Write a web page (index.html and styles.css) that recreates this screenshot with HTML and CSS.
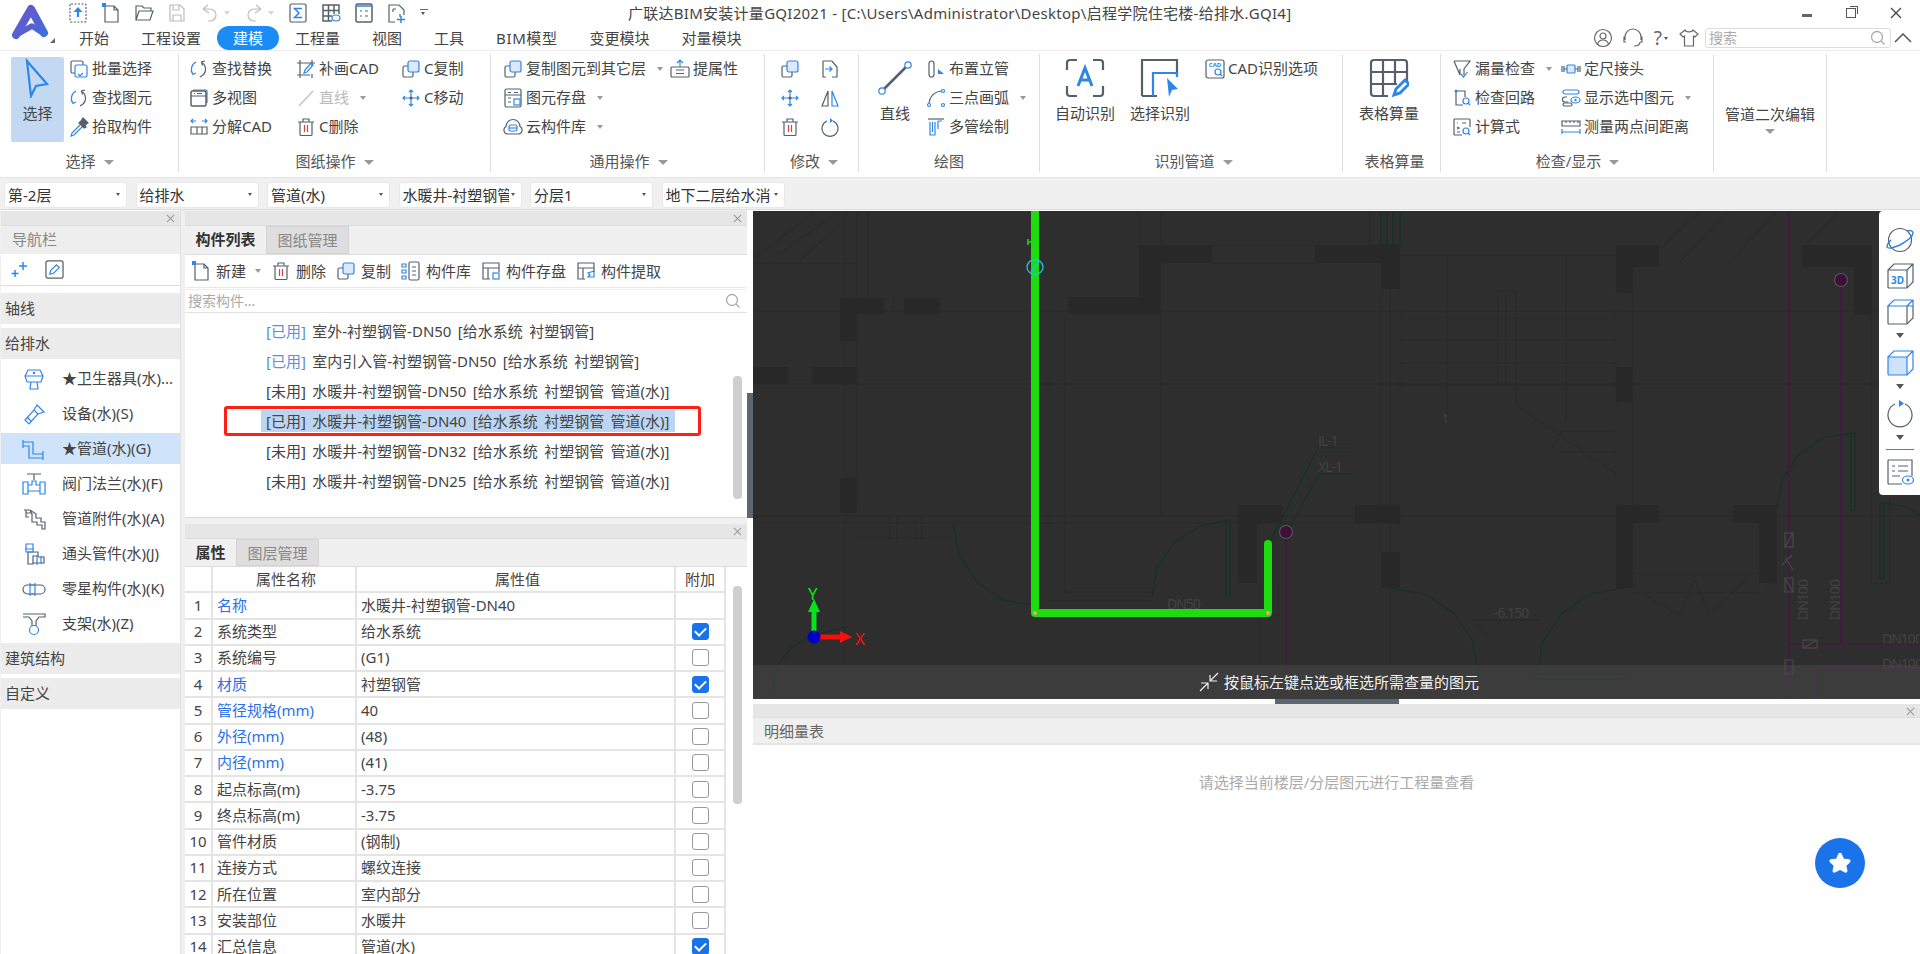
FILE: index.html
```html
<!DOCTYPE html>
<html lang="zh-CN">
<head>
<meta charset="utf-8">
<title>广联达BIM安装计量GQI2021</title>
<link rel="stylesheet" href="styles.css">
</head>
<body>
<svg class="defs" width="0" height="0">
<symbol id="i-copy" viewBox="0 0 20 20"><rect x="2" y="7" width="10" height="11" rx="1.5"/><rect class="b lf" x="7" y="2" width="11" height="11" rx="2"/></symbol>
<symbol id="i-batch" viewBox="0 0 20 20"><rect x="2" y="2" width="12" height="12" rx="1.5"/><rect class="b wf" x="6" y="6" width="12" height="12" rx="1.5"/><path class="b" d="M9 15l2 2 3-3"/></symbol>
<symbol id="i-find" viewBox="0 0 20 20"><path class="b" d="M7 3a8 8 0 0 0-3 12M2 12l2 3.500 3-1.500"/><path d="M12 3a8 8 0 0 1 2 13M16 2l-3.500 1 1 3.500M11 18l3-2"/></symbol>
<symbol id="i-pick" viewBox="0 0 20 20"><path class="dk" d="M12 4l2-3 5 5-3 2 1 2-2 1-5-5z"/><path class="b" d="M11 8l-8 8-1 3 3-1 8-8"/></symbol>
<symbol id="i-multi" viewBox="0 0 20 20"><path class="b" d="M4 2h13a1 1 0 0 1 1 1v12"/><rect class="th15" x="2" y="3" width="15" height="15" rx="1.500"/><path d="M2 8h15M5 5.500h1M8 5.500h5"/></symbol>
<symbol id="i-explode" viewBox="0 0 20 20"><path class="b" d="M2 4h5M4 2L2 4l2 2M18 4h-5M16 2l2 2-2 2"/><path d="M2 10h16v7H2zM8 10v7M13 10v7"/></symbol>
<symbol id="i-patch" viewBox="0 0 20 20"><path d="M4 1v18M16 1v6M16 15v4M1 4h18M1 16h13"/><path class="b" d="M8 14l1-3 6-7 2 2-6 7z"/></symbol>
<symbol id="i-gline" viewBox="0 0 20 20"><path class="gr" d="M3 18L17 3"/></symbol>
<symbol id="i-trash" viewBox="0 0 20 20"><path d="M4 5h12v12.500a1 1 0 0 1-1 1H5a1 1 0 0 1-1-1zM2 5h16M7 5V2h6v3"/><path class="r" d="M8.500 8v7M11.500 8v7"/></symbol>
<symbol id="i-move" viewBox="0 0 20 20"><path class="b" d="M10 2v16M2 10h16M8 4l2-2 2 2M8 16l2 2 2-2M4 8l-2 2 2 2M16 8l2 2-2 2"/><circle class="dk" cx="10" cy="10" r="1"/></symbol>
<symbol id="i-extract" viewBox="0 0 20 20"><path class="b" d="M10 8V1M7 4l3-3 3 3"/><rect x="1" y="8" width="18" height="10" rx="1"/><path d="M6 11h8M6 14.500h8"/></symbol>
<symbol id="i-store" viewBox="0 0 20 20"><rect x="2" y="1" width="16" height="18" rx="1.500"/><path d="M2 7h16M5 4.500h3M11 4.500h4M5 10h3M5 14h3"/><rect class="b" x="11" y="11" width="6" height="6"/></symbol>
<symbol id="i-cloud" viewBox="0 0 20 20"><path d="M5 17a4 4 0 0 1-2-7.500A7 7 0 0 1 17 9.500 4 4 0 0 1 15 17z"/><rect class="b" x="6" y="8" width="8" height="6" rx="1.500"/><path class="b" d="M6 11h8"/></symbol>
<symbol id="i-exchange" viewBox="0 0 20 20"><path d="M3 2h9l5 6v10H12M3 2v16h3"/><path class="b" d="M5 10h7M9.500 7.500l2.500 2.500-2.500 2.500"/></symbol>
<symbol id="i-mirror" viewBox="0 0 20 20"><path d="M8 3L2 18h6z"/><path class="b" d="M12 3l6 15h-6z"/></symbol>
<symbol id="i-rotate" viewBox="0 0 20 20"><path d="M7 4a8 8 0 1 0 6 0"/><path class="bf" d="M10 1l3 2.500-3 2.500z"/></symbol>
<symbol id="i-line" viewBox="0 0 36 36"><path class="th" d="M6 30L30 6"/><circle class="b wf" cx="31" cy="5" r="3.200"/><circle class="b wf" cx="5" cy="31" r="3.200"/></symbol>
<symbol id="i-riser" viewBox="0 0 20 20"><rect x="3" y="2" width="5" height="16" rx="2.500"/><path class="bf" d="M12 10l6 5h-6z"/></symbol>
<symbol id="i-arc" viewBox="0 0 20 20"><path d="M3 17C3 8 9 3 17 3"/><circle class="b wf" cx="17" cy="3" r="1.500"/><circle class="b wf" cx="3" cy="17" r="1.500"/><circle class="b wf" cx="17" cy="17" r="1.500"/></symbol>
<symbol id="i-pipes" viewBox="0 0 20 20"><path d="M2 2h16"/><path class="b" d="M4 5v13h5V5M6.500 5v10M12 4h4M12 4v8"/></symbol>
<symbol id="i-auto" viewBox="0 0 40 40"><path class="th2" d="M2 12V5a3 3 0 0 1 3-3h7M28 2h7a3 3 0 0 1 3 3v7M2 28v7a3 3 0 0 0 3 3h7M38 28v7a3 3 0 0 1-3 3h-7"/><path class="b th3" d="M13 28L20 10l7 18M15.500 22h9"/></symbol>
<symbol id="i-sel" viewBox="0 0 40 40"><path class="th2" d="M2 38V2h35v15M2 38h15"/><path class="b th2" d="M13 38V15h24v4"/><path class="bf" d="M27 20l11 11-6 1-3 7z"/></symbol>
<symbol id="i-table" viewBox="0 0 40 40"><path class="th2" d="M19 38H5a3 3 0 0 1-3-3V5a3 3 0 0 1 3-3h30a3 3 0 0 1 3 3v20M2 14h36M2 26h26M14 2v36M26 2v24"/><path class="b th3" d="M25 37l2-6 9-9 4 4-9 9z"/></symbol>
<symbol id="i-filter" viewBox="0 0 20 20"><path d="M2 2h16l-6 8v6M8 10v6L2 2"/><path class="b" d="M9 15l2.500 3 4-5"/></symbol>
<symbol id="i-loop" viewBox="0 0 20 20"><path d="M4 3v14h7M4 3h9v6"/><circle class="bf" cx="4" cy="3" r="1.500"/><circle class="b" cx="14" cy="13" r="3"/><path class="b" d="M16 15l2 2"/></symbol>
<symbol id="i-calc" viewBox="0 0 20 20"><path d="M10 18H3a1 1 0 0 1-1-1V3a1 1 0 0 1 1-1h14a1 1 0 0 1 1 1v7"/><path d="M5 6h1M10 6h4M5 10l2 1-2 1M5 15h3"/><circle class="b" cx="14" cy="14" r="3"/><path class="b" d="M16 16l2 2"/></symbol>
<symbol id="i-splice" viewBox="0 0 20 20"><path d="M1 7v6M3 7v6M17 7v6M19 7v6M3 10h3M14 10h3"/><rect class="b lf" x="6" y="6" width="8" height="8" rx="1"/></symbol>
<symbol id="i-display" viewBox="0 0 20 20"><rect class="b" x="2" y="2" width="16" height="4" rx="2"/><path d="M6 9H4a2 2 0 0 0 0 5h3"/><rect x="2" y="15" width="9" height="3" rx="1.500"/><ellipse class="b" cx="14.500" cy="12" rx="4.500" ry="3"/><circle class="bf" cx="14.500" cy="12" r="1.200"/></symbol>
<symbol id="i-measure" viewBox="0 0 20 20"><path d="M1 4h18v5H1zM5 4v2M9 4v2M13 4v2M17 4v2"/><path class="b" d="M1 12v5M19 12v5M1 15h18"/></symbol>
<symbol id="i-wc" viewBox="0 0 24 24"><path class="b" d="M6 3h12l3 6-2 6H5L3 9zM3 9h18M9 15l-1 7h8l-1-7"/><circle class="b" cx="12" cy="6" r=".6"/></symbol>
<symbol id="i-equip" viewBox="0 0 24 24"><path class="b" d="M3 18l9-10 4 4-9 10zM12 8l3-5 7 7-6 2M15 3l-2 3M5 15l4 4"/></symbol>
<symbol id="i-pipe" viewBox="0 0 24 24"><path class="b" d="M1 3v8M1 5h10v12h10M1 9h6v12h14M21 14v9"/></symbol>
<symbol id="i-valve" viewBox="0 0 24 24"><path class="dk2" d="M5 2h14M12 2v6"/><path class="b" d="M1 10h5v12H1zM18 10h5v12h-5zM6 13h4v-4h4v4h4M6 19h12"/></symbol>
<symbol id="i-attach" viewBox="0 0 24 24"><path class="dk2" d="M2 3h6l2 4v8h5v3h5v4h3v-7h-4v-4h-5V7L8 3M4 3v7h3M4 6h6"/></symbol>
<symbol id="i-tee" viewBox="0 0 24 24"><path class="dk2" d="M6 22V10h10v4h-5v8zM16 15h6v6H11"/><path class="b" d="M4 2h7v8H4zM3 7h9M15 13v10M19 14v8"/></symbol>
<symbol id="i-part" viewBox="0 0 24 24"><rect class="dk2" x="1" y="8" width="22" height="9" rx="4.500"/><path class="b" d="M8 6v13M13 6v13M8 8h5M8 17h5"/></symbol>
<symbol id="i-bracket" viewBox="0 0 24 24"><path class="dk2" d="M1 2h22v3H17L14 9v5M1 5h6l3 4v5"/><circle class="b" cx="12" cy="18" r="4.500"/></symbol>
<symbol id="i-search" viewBox="0 0 16 16"><circle class="lg" cx="7" cy="7" r="5.500"/><path class="lg" d="M11 11l3.500 3.500"/></symbol>
<symbol id="i-planet" viewBox="0 0 28 28"><circle cx="14" cy="14" r="11.500"/><path class="b th1" d="M21 5c4-1 6 0 6 2 0 3-6 8-13 12-7 3-12 4-13 2 0-2 1-4 4-7"/></symbol>
<symbol id="i-cube" viewBox="0 0 28 28"><path d="M2 8v17a1 1 0 0 0 1 1h18l6-6V8"/><path class="b" d="M2 8l6-6h19v6l-6 0zM27 2l-6 6"/><path d="M21 8v18"/></symbol>
<symbol id="i-cube2" viewBox="0 0 28 28"><path class="b cf" d="M2 8h19v18H3a1 1 0 0 1-1-1z"/><path class="b" d="M2 8l6-6h19v18l-6 6M27 2l-6 6"/></symbol>
<symbol id="i-rotate2" viewBox="0 0 28 28"><path d="M9 4a12 12 0 1 0 10 0"/><path class="bf" d="M13 0l5 3.500-5 3.500z"/></symbol>
<symbol id="i-doc" viewBox="0 0 28 28"><path d="M16 26H3a1 1 0 0 1-1-1V3a1 1 0 0 1 1-1h23v16M6 8h3M12 8h10M6 13h3M12 13h10M6 18h8"/><ellipse class="b" cx="22" cy="22" rx="5.500" ry="4"/><circle class="bf" cx="22" cy="22" r="1.500"/></symbol>
<symbol id="q-up" viewBox="0 0 20 20"><rect class="ds" x="2" y="1" width="16" height="18" rx="1"/><path class="b th2" d="M10 14V7"/><path class="bf" d="M10 4l4.500 5h-9z"/></symbol>
<symbol id="q-new" viewBox="0 0 20 20"><path d="M4 19V3h9l4 4v12zM13 3v4h4"/><rect class="bf" x="1" y="0" width="4" height="4"/></symbol>
<symbol id="q-open" viewBox="0 0 20 20"><path d="M2 17V3h6l2 2h7v3M2 17h14l3-9H5z"/></symbol>
<symbol id="q-save" viewBox="0 0 20 20"><path d="M3 2h10l4 4v12H3zM6 2v5h6V2M6 18v-6h8v6"/></symbol>
<symbol id="q-undo" viewBox="0 0 20 20"><path d="M3 6l5-4M3 6l6 4M3 6h7a6 6 0 0 1 0 12H8"/></symbol>
<symbol id="q-redo" viewBox="0 0 20 20"><path d="M17 6l-5-4M17 6l-6 4M17 6h-7a6 6 0 0 0 0 12h2"/></symbol>
<symbol id="q-sum" viewBox="0 0 20 20"><rect x="2" y="1" width="16" height="18" rx="1.500"/><path class="b th15" d="M14 5.500H6.500L11 10l-4.500 4.500H14"/></symbol>
<symbol id="q-grid" viewBox="0 0 20 20"><path class="th15" d="M11 18H2V2h16v9M2 7.500h16M2 13h9M7.500 2v16M13 2v9"/><ellipse class="b" cx="15" cy="15" rx="4" ry="3"/></symbol>
<symbol id="q-list" viewBox="0 0 20 20"><rect class="th15" x="2" y="1" width="16" height="18" rx="1.500"/><path class="b th15" d="M2 3h16"/><path d="M6 8h2M11 8h3M6 13h2M11 13h3"/></symbol>
<symbol id="q-crop" viewBox="0 0 20 20"><path d="M8 19H2V2h10l5 5v5M6 6h3M6 6v3M13 11v3"/><path class="b th15" d="M14 13v7M10 16.500h8"/></symbol>
<symbol id="i-arrow" viewBox="0 0 40 40"><path class="b th2" d="M9 3l20 23-11 2-5 10z"/></symbol>
<symbol id="i-lib" viewBox="0 0 20 20"><path class="b" d="M1 3h4v3H1zM1 9h4v3H1zM1 15h4v3H1z"/><rect x="8" y="1" width="10" height="18" rx="1.500"/><path d="M11 6h4M11 10h4M11 14h4"/></symbol>
<symbol id="i-csave" viewBox="0 0 20 20"><path d="M9 18H2V2h16v9M2 7h16M7 7v11"/><rect class="b" x="12" y="12" width="6" height="6"/></symbol>
<symbol id="i-cget" viewBox="0 0 20 20"><path d="M9 18H2V2h16v9M2 7h16M7 7v11"/><path class="b" d="M18 10v6h-6l2-2-2-2z"/></symbol>
</svg>

<div class="app">
  <header class="top">
    <div class="logo">
      <svg class="logo-svg" viewBox="0 0 42 40" width="42" height="40"><defs><linearGradient id="lg1" x1="0" y1="0" x2="1" y2="1"><stop offset="0" stop-color="#6a55cf"/><stop offset="1" stop-color="#3d6fd6"/></linearGradient></defs><path class="logo-a" stroke="url(#lg1)" d="M6 32L21 6 34 30"/><path class="logo-b" stroke="url(#lg1)" d="M6 32L22 23 31 29"/></svg>
      <i class="logo-tri"></i>
    </div>
    <div class="top-main">
      <div class="row-title">
        <div class="quick">
          <svg class="ic"><use href="#q-up"/></svg>
          <svg class="ic"><use href="#q-new"/></svg>
          <svg class="ic"><use href="#q-open"/></svg>
          <svg class="ic ghost"><use href="#q-save"/></svg>
          <span class="q-wide ghost"><svg class="ic"><use href="#q-undo"/></svg><i class="caret"></i></span>
          <span class="q-wide ghost"><svg class="ic"><use href="#q-redo"/></svg><i class="caret"></i></span>
          <svg class="ic"><use href="#q-sum"/></svg>
          <svg class="ic"><use href="#q-grid"/></svg>
          <svg class="ic"><use href="#q-list"/></svg>
          <svg class="ic"><use href="#q-crop"/></svg>
          <span class="q-more"><i class="caret dark"></i></span>
        </div>
        <div class="title">广联达BIM安装计量GQI2021 - [C:\Users\Administrator\Desktop\启程学院住宅楼-给排水.GQI4]</div>
        <div class="win">
          <span class="w-min"></span>
          <span class="w-res"></span>
          <svg class="w-x" viewBox="0 0 12 12" width="12" height="12"><path d="M1 1l10 10M11 1L1 11"/></svg>
        </div>
      </div>
      <div class="row-tabs">
        <span class="tab">开始</span><span class="tab">工程设置</span><span class="tab on">建模</span><span class="tab">工程量</span><span class="tab">视图</span><span class="tab">工具</span><span class="tab wide">BIM模型</span><span class="tab">变更模块</span><span class="tab">对量模块</span>
        <div class="top-tools">
          <svg class="tt" viewBox="0 0 20 20" width="20" height="20"><circle cx="10" cy="10" r="8.500"/><circle cx="10" cy="8" r="3"/><path d="M4.500 16c1-3 3-4 5.500-4s4.500 1 5.500 4"/></svg>
          <svg class="tt" viewBox="0 0 22 20" width="22" height="20"><path d="M3 12V9a8 8 0 0 1 16 0v3M3 9H2v5h2M19 9h1v5h-2M18 14c0 3-3 4-6 4"/></svg>
          <span class="help">?</span><i class="caret dark"></i>
          <svg class="tt shirt" viewBox="0 0 20 20" width="20" height="20"><path d="M6 2L1 6l3 3 1.500-1v10h9V8L16 9l3-3-5-4c-1 2.500-7 2.500-8 0z"/></svg>
          <div class="search">搜索<svg class="ic16"><use href="#i-search"/></svg></div>
          <svg class="tt collapse" viewBox="0 0 18 10" width="18" height="10"><path d="M1 9l8-8 8 8"/></svg>
        </div>
      </div>
    </div>
  </header>

  <section class="ribbon">
    <div class="group g1">
      <div class="gbody">
        <div class="big on"><svg class="ic40"><use href="#i-arrow"/></svg><span>选择</span></div>
        <div class="col">
          <div class="tool"><svg class="ic"><use href="#i-batch"/></svg>批量选择</div>
          <div class="tool"><svg class="ic"><use href="#i-find"/></svg>查找图元</div>
          <div class="tool"><svg class="ic"><use href="#i-pick"/></svg>拾取构件</div>
        </div>
      </div>
      <div class="glabel">选择<i class="caret big-c"></i></div>
    </div>
    <div class="group g2">
      <div class="gbody">
        <div class="col c107">
          <div class="tool"><svg class="ic"><use href="#i-find"/></svg>查找替换</div>
          <div class="tool"><svg class="ic"><use href="#i-multi"/></svg>多视图</div>
          <div class="tool"><svg class="ic"><use href="#i-explode"/></svg>分解CAD</div>
        </div>
        <div class="col c105">
          <div class="tool"><svg class="ic"><use href="#i-patch"/></svg>补画CAD</div>
          <div class="tool off"><svg class="ic"><use href="#i-gline"/></svg>直线<i class="caret"></i></div>
          <div class="tool"><svg class="ic"><use href="#i-trash"/></svg>C删除</div>
        </div>
        <div class="col">
          <div class="tool"><svg class="ic"><use href="#i-copy"/></svg>C复制</div>
          <div class="tool"><svg class="ic"><use href="#i-move"/></svg>C移动</div>
        </div>
      </div>
      <div class="glabel">图纸操作<i class="caret big-c"></i></div>
    </div>
    <div class="group g3">
      <div class="gbody">
        <div class="col c167">
          <div class="tool"><svg class="ic"><use href="#i-copy"/></svg>复制图元到其它层<i class="caret"></i></div>
          <div class="tool"><svg class="ic"><use href="#i-store"/></svg>图元存盘<i class="caret"></i></div>
          <div class="tool"><svg class="ic"><use href="#i-cloud"/></svg>云构件库<i class="caret"></i></div>
        </div>
        <div class="col">
          <div class="tool"><svg class="ic"><use href="#i-extract"/></svg>提属性</div>
        </div>
      </div>
      <div class="glabel">通用操作<i class="caret big-c"></i></div>
    </div>
    <div class="group g4">
      <div class="gbody">
        <div class="col c40">
          <div class="tool"><svg class="ic"><use href="#i-copy"/></svg></div>
          <div class="tool"><svg class="ic"><use href="#i-move"/></svg></div>
          <div class="tool"><svg class="ic"><use href="#i-trash"/></svg></div>
        </div>
        <div class="col">
          <div class="tool"><svg class="ic"><use href="#i-exchange"/></svg></div>
          <div class="tool"><svg class="ic"><use href="#i-mirror"/></svg></div>
          <div class="tool"><svg class="ic"><use href="#i-rotate"/></svg></div>
        </div>
      </div>
      <div class="glabel">修改<i class="caret big-c"></i></div>
    </div>
    <div class="group g5">
      <div class="gbody">
        <div class="big w52"><svg class="ic36"><use href="#i-line"/></svg><span>直线</span></div>
        <div class="col">
          <div class="tool"><svg class="ic"><use href="#i-riser"/></svg>布置立管</div>
          <div class="tool"><svg class="ic"><use href="#i-arc"/></svg>三点画弧<i class="caret"></i></div>
          <div class="tool"><svg class="ic"><use href="#i-pipes"/></svg>多管绘制</div>
        </div>
      </div>
      <div class="glabel">绘图</div>
    </div>
    <div class="group g6">
      <div class="gbody">
        <div class="big w60"><svg class="ic40"><use href="#i-auto"/></svg><span>自动识别</span></div>
        <div class="big w60"><svg class="ic40"><use href="#i-sel"/></svg><span>选择识别</span></div>
        <div class="col">
          <div class="tool"><svg class="ic" viewBox="0 0 20 20"><rect x="1" y="1" width="18" height="18" rx="2"/><text class="cadt" x="10" y="8">CAD</text><circle class="b" cx="13" cy="13" r="3"/><path class="b" d="M15 15l2 2"/></svg>CAD识别选项</div>
        </div>
      </div>
      <div class="glabel">识别管道<i class="caret big-c"></i></div>
    </div>
    <div class="group g7">
      <div class="gbody">
        <div class="big w60"><svg class="ic40"><use href="#i-table"/></svg><span>表格算量</span></div>
      </div>
      <div class="glabel">表格算量</div>
    </div>
    <div class="group g8">
      <div class="gbody">
        <div class="col c109">
          <div class="tool"><svg class="ic"><use href="#i-filter"/></svg>漏量检查<i class="caret"></i></div>
          <div class="tool"><svg class="ic"><use href="#i-loop"/></svg>检查回路</div>
          <div class="tool"><svg class="ic"><use href="#i-calc"/></svg>计算式</div>
        </div>
        <div class="col">
          <div class="tool"><svg class="ic"><use href="#i-splice"/></svg>定尺接头</div>
          <div class="tool"><svg class="ic"><use href="#i-display"/></svg>显示选中图元<i class="caret"></i></div>
          <div class="tool"><svg class="ic"><use href="#i-measure"/></svg>测量两点间距离</div>
        </div>
      </div>
      <div class="glabel">检查/显示<i class="caret big-c"></i></div>
    </div>
    <div class="group g9">
      <div class="edit2">管道二次编辑<i class="caret big-c"></i></div>
    </div>
  </section>

  <div class="filters">
    <div class="sel"><span>第-2层</span><i class="caret dark"></i></div>
    <div class="sel"><span>给排水</span><i class="caret dark"></i></div>
    <div class="sel"><span>管道(水)</span><i class="caret dark"></i></div>
    <div class="sel"><span>水暖井-衬塑钢管</span><i class="caret dark"></i></div>
    <div class="sel"><span>分层1</span><i class="caret dark"></i></div>
    <div class="sel"><span>地下二层给水消</span><i class="caret dark"></i></div>
  </div>

  <main class="main">
    <nav class="nav">
      <div class="strip"><svg class="x" viewBox="0 0 10 10" width="9" height="9"><path d="M1 1l8 8M9 1L1 9"/></svg></div>
      <div class="nav-title">导航栏</div>
      <div class="nav-tools">
        <svg class="nt" viewBox="0 0 20 20" width="20" height="20"><path d="M13 2v8M9 6h8M5 10v7M1.500 13.500h7"/></svg>
        <svg class="nt2" viewBox="0 0 20 20" width="19" height="19"><rect x="1" y="1" width="18" height="18" rx="2"/><path class="b" d="M5 15l1-4 6-6 3 3-6 6z"/></svg>
      </div>
      <div class="sec gap8">轴线</div>
      <div class="sec gap4">给排水</div>
      <ul class="items">
        <li><svg class="ic24"><use href="#i-wc"/></svg><span>★卫生器具(水)...</span></li>
        <li><svg class="ic24"><use href="#i-equip"/></svg><span>设备(水)(S)</span></li>
        <li class="on"><svg class="ic24"><use href="#i-pipe"/></svg><span>★管道(水)(G)</span></li>
        <li><svg class="ic24"><use href="#i-valve"/></svg><span>阀门法兰(水)(F)</span></li>
        <li><svg class="ic24"><use href="#i-attach"/></svg><span>管道附件(水)(A)</span></li>
        <li><svg class="ic24"><use href="#i-tee"/></svg><span>通头管件(水)(J)</span></li>
        <li><svg class="ic24"><use href="#i-part"/></svg><span>零星构件(水)(K)</span></li>
        <li><svg class="ic24"><use href="#i-bracket"/></svg><span>支架(水)(Z)</span></li>
      </ul>
      <div class="sec">建筑结构</div>
      <div class="sec gap4">自定义</div>
    </nav>

    <div class="mid">
      <section class="comp">
        <div class="strip"><svg class="x" viewBox="0 0 10 10" width="9" height="9"><path d="M1 1l8 8M9 1L1 9"/></svg></div>
        <div class="ptabs"><span class="ptab on">构件列表</span><span class="ptab">图纸管理</span></div>
        <div class="ptools">
          <span class="pt"><svg class="ic"><use href="#q-new"/></svg>新建<i class="caret"></i></span>
          <span class="pt"><svg class="ic"><use href="#i-trash"/></svg>删除</span>
          <span class="pt"><svg class="ic"><use href="#i-copy"/></svg>复制</span>
          <span class="pt"><svg class="ic"><use href="#i-lib"/></svg>构件库</span>
          <span class="pt"><svg class="ic"><use href="#i-csave"/></svg>构件存盘</span>
          <span class="pt"><svg class="ic"><use href="#i-cget"/></svg>构件提取</span>
        </div>
        <div class="psearch">搜索构件...<svg class="ic16"><use href="#i-search"/></svg></div>
        <div class="plist">
          <div class="li"><span class="used">[已用]</span> 室外-衬塑钢管-DN50 [给水系统 衬塑钢管]</div>
          <div class="li"><span class="used">[已用]</span> 室内引入管-衬塑钢管-DN50 [给水系统 衬塑钢管]</div>
          <div class="li">[未用] 水暖井-衬塑钢管-DN50 [给水系统 衬塑钢管 管道(水)]</div>
          <div class="li"><span class="hl">[已用] 水暖井-衬塑钢管-DN40 [给水系统 衬塑钢管 管道(水)]</span></div>
          <div class="li">[未用] 水暖井-衬塑钢管-DN32 [给水系统 衬塑钢管 管道(水)]</div>
          <div class="li">[未用] 水暖井-衬塑钢管-DN25 [给水系统 衬塑钢管 管道(水)]</div>
          <div class="redbox"></div>
          <div class="sb sb1"></div>
        </div>
      </section>
      <section class="props">
        <div class="strip"><svg class="x" viewBox="0 0 10 10" width="9" height="9"><path d="M1 1l8 8M9 1L1 9"/></svg></div>
        <div class="ptabs t2"><span class="ptab on n">属性</span><span class="ptab">图层管理</span></div>
        <div class="table">
          <div class="tr th"><div></div><div>属性名称</div><div>属性值</div><div>附加</div></div>
          <div class="tr"><div>1</div><div class="bl">名称</div><div>水暖井-衬塑钢管-DN40</div><div></div></div>
          <div class="tr"><div>2</div><div>系统类型</div><div>给水系统</div><div><i class="cb ck"></i></div></div>
          <div class="tr"><div>3</div><div>系统编号</div><div>(G1)</div><div><i class="cb"></i></div></div>
          <div class="tr"><div>4</div><div class="bl">材质</div><div>衬塑钢管</div><div><i class="cb ck"></i></div></div>
          <div class="tr"><div>5</div><div class="bl">管径规格(mm)</div><div>40</div><div><i class="cb"></i></div></div>
          <div class="tr"><div>6</div><div class="bl">外径(mm)</div><div>(48)</div><div><i class="cb"></i></div></div>
          <div class="tr"><div>7</div><div class="bl">内径(mm)</div><div>(41)</div><div><i class="cb"></i></div></div>
          <div class="tr"><div>8</div><div>起点标高(m)</div><div>-3.75</div><div><i class="cb"></i></div></div>
          <div class="tr"><div>9</div><div>终点标高(m)</div><div>-3.75</div><div><i class="cb"></i></div></div>
          <div class="tr"><div>10</div><div>管件材质</div><div>(钢制)</div><div><i class="cb"></i></div></div>
          <div class="tr"><div>11</div><div>连接方式</div><div>螺纹连接</div><div><i class="cb"></i></div></div>
          <div class="tr"><div>12</div><div>所在位置</div><div>室内部分</div><div><i class="cb"></i></div></div>
          <div class="tr"><div>13</div><div>安装部位</div><div>水暖井</div><div><i class="cb"></i></div></div>
          <div class="tr"><div>14</div><div>汇总信息</div><div>管道(水)</div><div><i class="cb ck"></i></div></div>
          <div class="sb sb2"></div>
        </div>
      </section>
    </div>

    <div class="split"><span class="grip"></span></div>

    <div class="right">
      <div class="canvas">
        <svg class="cad" viewBox="753 211 1167 488" width="1167" height="488">
          <g class="wall">
            <rect x="1139" y="245" width="73" height="18"/><rect x="1315" y="245" width="85" height="18"/><rect x="1139" y="245" width="22" height="69"/><rect x="1068" y="297" width="93" height="17"/>
            <rect x="841" y="298" width="43" height="16"/><rect x="904" y="298" width="36" height="16"/><rect x="840" y="298" width="17" height="43"/><rect x="753" y="367" width="35" height="17"/><rect x="813" y="367" width="44" height="17"/><rect x="840" y="478" width="17" height="35"/>
            <rect x="1238" y="505" width="44" height="18"/><rect x="1238" y="505" width="19" height="78"/><rect x="1355" y="505" width="45" height="18"/><rect x="1381" y="245" width="19" height="44"/><rect x="1381" y="552" width="19" height="36"/>
            <rect x="1616" y="245" width="43" height="22"/><rect x="1616" y="245" width="17" height="48"/><rect x="1616" y="367" width="17" height="35"/><rect x="1616" y="505" width="43" height="18"/><rect x="1616" y="505" width="17" height="83"/><rect x="1733" y="505" width="44" height="18"/><rect x="1759" y="505" width="18" height="78"/><rect x="1802" y="245" width="70" height="22"/><rect x="1854" y="245" width="18" height="70"/>
          </g>
          <g class="thin">
            <path d="M753 263H857M753 311H1920M753 384H1920M753 516H1920M753 523H1400M845 211V665M857 211V505M868 211V298M1139 211V245M1161 211V245"/>
            <path d="M1048 297V601H1152M1065 314V592H1156M1161 314V516M1212 245H1315M1212 263H1315"/>
            <path d="M884 298V314M893 298V314M904 298V314M788 367V384M813 367V384"/>
            <path d="M890 516V540M897 516V540M915 516V540M922 516V540M857 538H953"/>
            <path d="M753 260L815 211M770 260L840 211M800 260L840 225"/>
            <path d="M1381 289V552M1390 289V552M1400 289V552"/>
            <path d="M1400 255H1616M1400 318H1616M1400 340H1616M1400 363H1616M1400 385H1616M1447 255V420M1566 255V420M1498 385V291H1516V405L1616 474M1506 385V296"/>
            <path d="M1560 431H1616M1560 452H1616M1561 431L1552 448"/>
            <path d="M1616 293V505M1633 293V367M1633 402V505"/>
            <path d="M1633 593H1759M1642 593L1679 615 1695 580 1709 615 1746 580M1633 574H1759"/>
            <path d="M1777 211L1730 262M1730 211L1680 262M1700 211L1659 250M1840 211L1800 250"/>
            <path d="M1390 588V665M1768 588V665M1776 523V588"/>
            <path d="M1871 315V583H1890V315"/>
            <path d="M1370 211V245M1259 583V665M1278 583V615H1238"/>
            <path d="M1473 620H1540M1473 620L1487 634 1501 620"/>
          </g>
          <g class="txt">
            <text x="1318" y="446" class="t14">JL-1</text><text x="1318" y="472" class="t14">XL-1</text>
            <text x="1167" y="609" class="t14">DN50</text><text x="1494" y="618" class="t14">-6.150</text>
            <text x="1882" y="644" class="t14">DN100</text><text x="1882" y="669" class="t14">DN100</text>
            <text class="t14" transform="translate(1808 620) rotate(-90)">DN100</text><text class="t14" transform="translate(1840 620) rotate(-90)">DN100</text>
            <text x="1442" y="423" class="t12">1</text>
          </g>
          <g class="door">
            <path d="M953 523L959 555 977 582 1003 600 1030 605"/>
            <path d="M1152 597L1157 567 1175 542 1200 526 1228 520"/><rect x="1226" y="520" width="4" height="77"/>
            <path d="M770 698L778 665 791 648 809 637 845 627"/>
            <path d="M1270 542L1318 448H1352M1290 527L1319 474H1353"/>
            <path d="M1390 588L1424 594 1454 613 1472 640 1479 678"/>
            <path d="M1538 675L1542 643 1562 613 1590 594 1624 588"/>
            <path d="M1777 508L1782 480 1799 455 1823 438 1852 433"/><rect x="1851" y="433" width="4" height="77"/>
            <rect x="1880" y="503" width="4" height="76"/><path d="M1885 503L1907 507 1920 515"/>
            <path d="M1381 211V245H1400V211M1387 211V245M1393 211V245"/><rect x="1536" y="674" width="88" height="5"/>
          </g>
          <g class="purple">
            <path d="M1789 211V699M1841 287V644M1789 644H1920M1286 539V699M1816 699V670H1920"/>
            <circle cx="1286" cy="532" r="6.500"/><circle cx="1841" cy="280" r="6.500"/>
          </g>
          <g class="valve">
            <rect x="1785" y="533" width="8" height="14"/><path d="M1785 547L1793 533M1785 578L1793 592"/><rect x="1785" y="578" width="8" height="14"/><path d="M1785 557L1793 570M1782 565L1792 555"/><rect x="1803" y="640" width="14" height="8"/><path d="M1803 648L1817 640"/><rect x="1785" y="660" width="8" height="14"/>
          </g>
          <path class="pipe" d="M1035 211V613H1268V544"/>
          <circle class="nub" cx="1035" cy="613" r="2"/><circle class="nub" cx="1268" cy="613" r="2"/>
          <ellipse class="cyan" cx="1035" cy="267" rx="8" ry="7.500"/><path class="cyan" d="M1031 272L1039 262"/>
          <path class="gmark" d="M1028 239V245M1028 242H1035"/>
          <circle class="cap" cx="1268" cy="544" r="4"/>
          <path class="ax-g" d="M814 632V612"/><path class="ax-gf" d="M814 599L820 612H808z"/><text class="ax-tg" x="808" y="600">Y</text>
          <path class="ax-r" d="M820 637H840"/><path class="ax-rf" d="M852 637L840 631V643z"/><text class="ax-tr" x="855" y="645">X</text>
          <ellipse class="ax-b" cx="814" cy="637" rx="6.500" ry="6.500"/>
        </svg>
        <div class="hint">
          <svg viewBox="0 0 22 20" width="22" height="20"><path d="M20 1L12 9M12 3V9H19M2 19L10 11M10 17V11H3"/></svg>
          <span>按鼠标左键点选或框选所需查量的图元</span>
        </div>
        <div class="vtools">
          <svg class="v"><use href="#i-planet"/></svg>
          <svg class="v" viewBox="0 0 28 28"><path d="M2 8l6-6h19v18l-6 6H3a1 1 0 0 1-1-1zM2 8h19v18M21 8l6-6"/><text class="td" x="5" y="22">3D</text></svg>
          <svg class="v"><use href="#i-cube"/></svg>
          <i class="vc"></i>
          <svg class="v"><use href="#i-cube2"/></svg>
          <i class="vc"></i>
          <svg class="v"><use href="#i-rotate2"/></svg>
          <i class="vc"></i>
          <b class="vsep"></b>
          <svg class="v"><use href="#i-doc"/></svg>
        </div>
      </div>
      <div class="hsplit"><span class="hgrip"></span></div>
      <section class="detail">
        <div class="strip"><svg class="x" viewBox="0 0 10 10" width="9" height="9"><path d="M1 1l8 8M9 1L1 9"/></svg></div>
        <div class="dtab">明细量表</div>
        <div class="dempty">请选择当前楼层/分层图元进行工程量查看</div>
      </section>
    </div>
    <div class="fab"><svg viewBox="0 0 24 24" width="26" height="26"><path d="M12 2.500c1 0 1.600 .8 2 1.800l1.600 3.700 4 .4c2.300 .3 2.800 2 1.300 3.400l-3 2.700 .9 4c.4 2-1 3-2.800 2L12 18.500l-4 2c-1.800 1-3.200 0-2.800-2l.9-4-3-2.700C1.600 10.400 2 8.700 4.400 8.400l4-.4L10 4.300c.4-1 1-1.800 2-1.800z"/></svg></div>
  </main>
</div>
</body>
</html>
```

FILE: styles.css
```css
* { box-sizing: border-box; }
html, body { margin: 0; height: 954px; overflow: hidden; background: #fff; }
body, svg text { font-family: "Noto Sans", "Noto Sans CJK SC", sans-serif; }
body { font-size: 15px; color: #444; line-height: 1; }
i { display: inline-block; font-style: normal; }
ul { list-style: none; margin: 0; padding: 0; }
.defs { position: absolute; }

.ic, .ic16, .ic24, .ic36, .ic40, .v { fill: none; stroke: #55606b; stroke-width: 1.2; flex: none; }
.ic { width: 20px; height: 20px; }
.ic16 { width: 16px; height: 16px; }
.ic24 { width: 24px; height: 24px; }
.ic36 { width: 36px; height: 36px; }
.ic40 { width: 40px; height: 40px; }
.b { stroke: #2f86e8; }
.wf { fill: #fff; }
.lf { fill: #dbe9fb; }
.bf { fill: #2f86e8; stroke: none; }
.cf { fill: #cfe2fb; }
.r { stroke: #e2403a; }
.dk { fill: #55606b; }
.dk2 { stroke: #55606b; }
.gr { stroke: #c4c4c4; stroke-width: 1.500; }
.lg { stroke: #a8a8a8; stroke-width: 1.300; }
.th { stroke-width: 2.500; }
.th1 { stroke-width: 1.500; }
.th15 { stroke-width: 1.500; }
.th2 { stroke-width: 2.200; }
.th3 { stroke-width: 3; }
.ds { stroke-dasharray: 2 1.500; }
.cadt { font-size: 6px; font-weight: 700; fill: #2f86e8; stroke: none; text-anchor: middle; }
.td { font-size: 10px; font-weight: 700; fill: #2f86e8; stroke: none; }

.caret { width: 0; height: 0; border: 3.500px solid transparent; border-top: 4px solid #9a9a9a; border-bottom: 0; }
.caret.dark { border-top-color: #555; border-left-width: 2.500px; border-right-width: 2.500px; border-top-width: 3.500px; }
.caret.big-c { border-left-width: 5px; border-right-width: 5px; border-top-width: 5px; margin-left: 8px; vertical-align: 2px; }

/* top */
.top { display: flex; height: 51px; background: #fff; border-bottom: 1px solid #ececec; }
.logo { width: 63px; position: relative; flex: none; padding: 3px 0 0 10px; }
.logo-svg { display: block; fill: none; stroke-linecap: round; stroke-linejoin: round; }
.logo-a { stroke-width: 8; }
.logo-b { stroke-width: 5.500; }
.logo-tri { position: absolute; left: 50px; top: 38px; width: 0; height: 0; border-left: 5px solid transparent; border-bottom: 5px solid #666; }
.top-main { flex: 1; min-width: 0; }
.row-title { display: flex; height: 26px; align-items: center; }
.quick { display: flex; align-items: center; gap: 13px; width: 565px; padding-left: 5px; flex: none; }
.q-wide { display: flex; align-items: center; width: 31px; gap: 4px; }
.ghost { opacity: .4; }
.q-more { width: 8px; height: 6px; border-top: 1px solid #666; position: relative; margin-top: -2px; }
.q-more .caret { position: absolute; left: 1px; top: 2px; }
.title { width: 662px; font-size: 15px; letter-spacing: .27px; color: #444; white-space: nowrap; text-align: center; flex: none; }
.win { margin-left: auto; display: flex; align-items: center; gap: 0; }
.w-min { width: 10px; height: 3px; background: #666; margin-right: 34px; margin-top: 4px; }
.w-res { width: 10px; height: 10px; border: 1.500px solid #555; margin-right: 34px; box-shadow: 2px -2px 0 -1px #fff, 3px -3px 0 -1px #555; }
.w-x { fill: none; stroke: #444; stroke-width: 1.300; margin-right: 18px; }
.row-tabs { display: flex; height: 24px; align-items: center; }
.tab { padding: 0 16px; height: 24px; line-height: 24px; color: #444; border-radius: 12px; flex: none; }
.tab.on { background: #1b8bf5; color: #fff; }
.tab.wide { letter-spacing: .6px; }
.top-tools { margin-left: auto; display: flex; align-items: center; padding-right: 8px; }
.tt { fill: none; stroke: #666; stroke-width: 1.200; flex: none; }
.tt + .tt { margin-left: 9px; }
.help { font-size: 19px; color: #666; margin-left: 10px; margin-right: 2px; }
.shirt { margin-left: 11px; }
.search { width: 186px; height: 20px; margin-left: 6px; border: 1px solid #ddd; border-radius: 3px; padding-left: 3px; color: #aaa; font-size: 14px; line-height: 18px; display: flex; justify-content: space-between; align-items: center; padding-right: 4px; }
.tt.collapse { margin-left: 3px; stroke-width: 1.500; stroke: #555; }

/* ribbon */
.ribbon { display: flex; height: 126px; padding-top: 3px; background: #fff; }
.group { height: 118px; border-right: 1px solid #dedede; flex: none; }
.g1 { width: 179px; padding-left: 11px; }
.g2 { width: 312px; padding-left: 10px; }
.g3 { width: 274px; padding-left: 12px; }
.g4 { width: 94px; padding-left: 15px; }
.g5 { width: 181px; padding-left: 10px; }
.g6 { width: 303px; padding-left: 15px; }
.g7 { width: 98px; padding-left: 16px; }
.g8 { width: 273px; padding-left: 11px; }
.g9 { width: 113px; }
.gbody { display: flex; height: 94px; }
.glabel { height: 24px; line-height: 26px; text-align: center; color: #555; margin-left: -10px; }
.col { display: flex; flex-direction: column; flex: none; }
.c107 { width: 107px; }
.c105 { width: 105px; }
.c167 { width: 167px; }
.c40 { width: 40px; }
.c109 { width: 109px; }
.tool { display: flex; align-items: center; height: 29px; gap: 3px; white-space: nowrap; color: #444; }
.tool .caret { margin-left: 8px; }
.tool.off { color: #bbb; }
.big { display: flex; flex-direction: column; align-items: center; width: 53px; height: 85px; margin-top: 3px; margin-right: 5px; padding-top: 1px; flex: none; border-radius: 2px; color: #444; }
.big span { line-height: 22px; margin-top: 4px; white-space: nowrap; }
.big.on { background: #c3d9f1; }
.big .ic36 { margin: 2px 0; }
.big.w52 { width: 52px; margin-right: 5px; }
.big.w60 { width: 60px; margin-right: 15px; }
.g7 .big.w60 { margin-right: 0; }
.edit2 { text-align: center; padding-top: 51px; line-height: 18px; }
.edit2 .caret { display: block; margin: 6px auto 0; }

/* filters */
.filters { display: flex; gap: 8.500px; height: 33px; padding: 3.500px 4px; background: #f0f0f0; border-top: 1px solid #e4e4e4; border-bottom: 1px solid #dcdcdc; }
.sel { width: 123px; height: 26px; background: #fff; border-radius: 3px; border: 1px solid #e8e8e8; display: flex; align-items: center; padding: 0 6px 0 3px; flex: none; color: #333; }
.sel span { flex: 1; min-width: 0; overflow: hidden; white-space: nowrap; line-height: 24px; }
.sel .caret { flex: none; margin-left: 2px; }

/* main */
.main { display: flex; height: 744px; background: #f0f0f0; position: relative; }
.strip { height: 15px; background: #e6e6e6; position: relative; border-bottom: 1px solid #dcdcdc; }
.x { position: absolute; right: 5px; top: 3px; fill: none; stroke: #9a9a9a; stroke-width: 1.200; }

.nav { width: 180px; margin-left: 1px; flex: none; background: #fff; border-right: 1px solid #e2e2e2; padding-top: 1px; margin-right: 4px; }
.nav-title { height: 28px; line-height: 27px; padding-left: 11px; background: #eeeeee; color: #888; }
.nav-tools { height: 32px; display: flex; align-items: center; gap: 15px; padding-left: 9px; background: #fff; border-bottom: 1px solid #ddd; }
.nt { fill: none; stroke: #2f86e8; stroke-width: 1.500; }
.nt2 { fill: none; stroke: #55606b; stroke-width: 1.300; }
.sec { height: 31px; line-height: 30px; padding-left: 4px; background: #ececec; color: #444; }
.gap8 { margin-top: 7px; }
.gap4 { margin-top: 4px; }
.items { padding: 2px 0 1.500px; }
.items li { height: 35px; display: flex; align-items: center; padding-left: 21px; gap: 16px; white-space: nowrap; }
.items li.on { background: linear-gradient(#fff 2px, #cfe4fb 2px, #cfe4fb 33px, #fff 33px); }

.mid { width: 562px; flex: none; padding-top: 1px; display: flex; flex-direction: column; }
.comp { height: 307px; background: #fff; flex: none; border-bottom: 1px solid #d8d8d8; }
.props { flex: 1; margin-top: 6px; background: #fff; min-height: 0; overflow: hidden; }
.ptabs { height: 29px; display: flex; background: #f0f0f0; border-bottom: 1px solid #ddd; }
.ptabs.t2 { height: 28px; }
.ptab { width: 83px; background: #dedede; color: #888; text-align: center; line-height: 27px; font-size: 15px; font-weight: 400; height: 100%; border: 1px solid #d4d4d4; }
.ptab.on { width: 81px; background: #f0f0f0; color: #333; font-weight: 700; border: 0; }
.ptab.on.n { width: 51px; }
.ptools { height: 33px; display: flex; align-items: center; gap: 10px; padding-left: 6px; background: #fff; border-bottom: 1px solid #e8e8e8; border-radius: 3px; }
.pt { display: flex; align-items: center; gap: 5px; white-space: nowrap; }
.pt .caret { margin-left: 4px; }
.psearch { height: 24px; display: flex; justify-content: space-between; align-items: center; color: #aaa; font-size: 14px; padding: 0 6px 0 3px; border-top: 1px solid #eee; border-bottom: 1px solid #e2e2e2; margin-top: 1px; }
.plist { position: relative; padding: 3px 0 0 81px; height: 204px; }
.li { height: 30px; line-height: 30px; white-space: nowrap; color: #444; word-spacing: 2.500px; }
.used { color: #5a8fe0; }
.hl { display: inline-block; height: 22px; line-height: 22px; background: #bcd6f2; padding: 0 5px; margin-left: -5px; }
.redbox { position: absolute; left: 39px; top: 93px; width: 477px; height: 30px; border: 3px solid #ff1f14; border-radius: 3px; }
.sb { position: absolute; width: 9px; background: #cfcfcf; border-radius: 4px; }
.sb1 { left: 548px; top: 63px; height: 123px; }
.table { position: relative; height: 400px; }
.tr { display: grid; grid-template-columns: 28px 144px 319px 50px; width: 541px; height: 26.250px; border-bottom: 2px solid #e4e4e4; color: #444; }
.tr > div { display: flex; align-items: center; padding-left: 4px; border-right: 2px solid #e4e4e4; white-space: nowrap; overflow: hidden; }
.tr > div:first-child { justify-content: center; padding: 0; }
.tr > div:last-child { justify-content: center; padding: 0; border-right: 2px solid #e4e4e4; }
.tr.th > div { justify-content: center; }
.bl { color: #2b6fe8; }
.cb { width: 17px; height: 17px; border: 1.500px solid #999; border-radius: 3px; background: #fff; position: relative; }
.cb.ck { background: #1a73e8; border-color: #1a73e8; }
.cb.ck::after { content: ""; position: absolute; left: 4px; top: 1px; width: 5px; height: 9px; border: solid #fff; border-width: 0 2px 2px 0; transform: rotate(45deg); }
.sb2 { left: 548px; top: 19px; height: 218px; }

.split { width: 6px; flex: none; position: relative; background: #fff; }
.grip { position: absolute; left: 0; top: 183px; width: 6px; height: 125px; background: #5c6670; }

.right { flex: 1; min-width: 0; padding-top: 1px; display: flex; flex-direction: column; background: #fff; }
.canvas { height: 488px; background: #2e2e2e; position: relative; overflow: hidden; flex: none; }
.cad { display: block; }
.wall rect { fill: #282828; stroke: none; }
.thin path { fill: none; stroke: #282828; stroke-width: 1; }
.txt text { fill: #424242; }
.t14 { font-size: 14px; letter-spacing: -1px; }
.t12 { font-size: 12px; }
.door path, .door rect { fill: none; stroke: #103326; stroke-width: 1.200; }
.purple path { fill: none; stroke: #4c1049; stroke-width: 1.200; }
.purple circle { fill: #3c1039; stroke: #555; stroke-width: 1.200; }
.valve rect, .valve path { fill: none; stroke: #484848; stroke-width: 1.200; }
.pipe { fill: none; stroke: #1edc0e; stroke-width: 8; stroke-linejoin: round; }
.nub { fill: #ff9a8a; }
.cyan { fill: none; stroke: #19c8d8; stroke-width: 1.300; }
.gmark { fill: none; stroke: #1edc0e; stroke-width: 1.500; }
.cap { fill: #1edc0e; }
.ax-g { stroke: #00e61a; stroke-width: 5; }
.ax-gf { fill: #00e61a; }
.ax-r { stroke: #f50f0f; stroke-width: 5; }
.ax-rf { fill: #f50f0f; }
.ax-b { fill: #0000c8; }
.ax-tg { fill: #00e61a; font-size: 17px; }
.ax-tr { fill: #f50f0f; font-size: 17px; }
.hint { position: absolute; left: 0; right: 0; bottom: 0; height: 34px; background: rgba(72, 72, 72, .55); display: flex; align-items: center; color: #f2f2f2; padding-left: 445px; gap: 4px; }
.hint svg { fill: none; stroke: #eee; stroke-width: 1.200; }
.vtools { position: absolute; right: 0; top: 0; width: 41px; height: 284px; background: #fff; border-radius: 4px 0 0 4px; display: flex; flex-direction: column; align-items: center; padding: 15px 0 0 0; }
.v { width: 28px; height: 28px; margin-bottom: 8px; }
.vc { width: 0; height: 0; border: 4px solid transparent; border-top: 5px solid #555; border-bottom: 0; margin: -1px 0 11px; }
.vsep { width: 28px; height: 1px; background: #777; margin: -2px 0 8px; }

.hsplit { height: 5px; position: relative; background: #fff; flex: none; }
.hgrip { position: absolute; left: 522px; top: 0; width: 124px; height: 5px; background: #5c6670; }
.detail { flex: 1; background: #fff; min-height: 0; }
.detail .strip { height: 14px; }
.dtab { height: 27px; line-height: 26px; padding-left: 11px; background: #f0f0f0; color: #666; border-bottom: 2px solid #e4e4e4; }
.dempty { text-align: center; color: #aaa; margin-top: 30px; }
.fab { position: absolute; left: 1815px; top: 628px; width: 50px; height: 50px; border-radius: 50%; background: #1a73e8; display: flex; align-items: center; justify-content: center; fill: #fff; }
```
